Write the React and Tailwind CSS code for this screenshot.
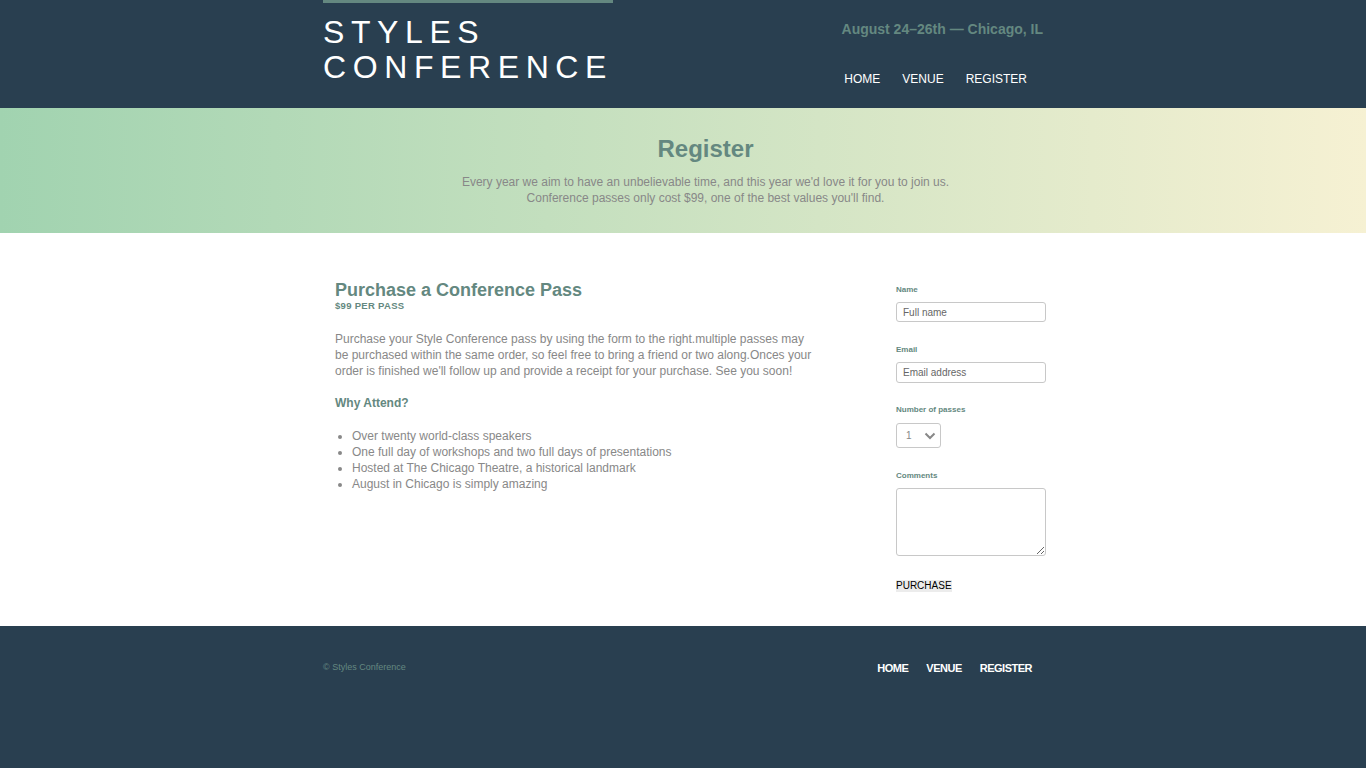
export default function App() {
  const font = { fontFamily: '"Liberation Sans", Arial, sans-serif' };
  return (
    <div style={font} className="min-h-[768px] bg-[#293f50] text-[#888]">
      <header className="bg-[#293f50] h-[108px]">
        <div className="w-[720px] mx-auto flex justify-between">
          <div className="w-[290px] border-t-[3px] border-[#648880] pt-[12px]">
            <h1 className="text-white text-[32px] leading-[35px] tracking-[6.6px] font-normal uppercase">
              Styles
              <br />
              Conference
            </h1>
          </div>
          <div className="flex flex-col items-end">
            <p className="mt-[21px] text-[14px] leading-[16px] font-bold text-[#648880]">
              August 24–26th — Chicago, IL
            </p>
            <nav className="mt-[35px] mr-[16px] flex gap-[22px] text-white text-[12px] leading-[14px]">
              <a>HOME</a>
              <a>VENUE</a>
              <a>REGISTER</a>
            </nav>
          </div>
        </div>
      </header>

      <section className="h-[125px] bg-[linear-gradient(to_right,#a1d3b0,#f6f1d3)] text-center pt-[27px] pl-[45px]">
        <h2 className="text-[24px] leading-[28px] font-bold text-[#648880]">Register</h2>
        <p className="mt-[11px] text-[12px] leading-[16px] text-[#888]">
          Every year we aim to have an unbelievable time, and this year we'd love it for you to join us.
          <br />
          Conference passes only cost $99, one of the best values you'll find.
        </p>
      </section>

      <main className="bg-white h-[393px]">
        <div className="w-[720px] mx-auto flex justify-between">
          <div className="w-[492px] pl-[12px] pt-[47px]">
            <h3 className="text-[18px] leading-[20px] font-bold text-[#648880]">Purchase a Conference Pass</h3>
            <h5 className="text-[9.5px] leading-[11px] font-bold uppercase text-[#648880] tracking-[0.3px]">$99 per pass</h5>
            <p className="mt-[20px] text-[12px] leading-[16px] text-[#888]">
              Purchase your Style Conference pass by using the form to the right.multiple passes may be purchased within the same order, so feel free to bring a friend or two along.Onces your order is finished we'll follow up and provide a receipt for your purchase. See you soon!
            </p>
            <h4 className="mt-[16px] text-[12px] leading-[16px] font-bold text-[#648880]">Why Attend?</h4>
            <ul className="mt-[17px] list-disc pl-[17px] text-[12px] leading-[16px] text-[#888] marker:text-[#888]">
              <li>Over twenty world-class speakers</li>
              <li>One full day of workshops and two full days of presentations</li>
              <li>Hosted at The Chicago Theatre, a historical landmark</li>
              <li>August in Chicago is simply amazing</li>
            </ul>
          </div>
          <form className="w-[150px] mr-[-3px] pt-[52px] flex flex-col">
            <label className="text-[8px] leading-[10px] font-bold text-[#648880]">Name</label>
            <input
              placeholder="Full name"
              className="mt-[7px] w-[150px] h-[20px] border border-[#c8c8c8] rounded-[3px] px-[6px] text-[10px] placeholder:text-[#666] outline-none"
            />
            <label className="mt-[23px] text-[8px] leading-[10px] font-bold text-[#648880]">Email</label>
            <input
              placeholder="Email address"
              className="mt-[7px] w-[150px] h-[21px] border border-[#c8c8c8] rounded-[3px] px-[6px] text-[10px] placeholder:text-[#666] outline-none"
            />
            <label className="mt-[22px] text-[8px] leading-[10px] font-bold text-[#648880]">Number of passes</label>
            <div className="mt-[8px] w-[45px] h-[25px] border border-[#c8c8c8] rounded-[3px] flex items-center justify-between pl-[9px] pr-[4px] text-[10px] text-[#888]">
              <span>1</span>
              <svg width="12" height="8" viewBox="0 0 12 8" fill="none">
                <path d="M1.5 1.5 L6 6 L10.5 1.5" stroke="#888" strokeWidth="2" />
              </svg>
            </div>
            <label className="mt-[23px] text-[8px] leading-[10px] font-bold text-[#648880]">Comments</label>
            <textarea className="mt-[7px] w-[150px] h-[68px] border border-[#c8c8c8] rounded-[3px] outline-none resize" />
            <div className="mt-[16px]">
              <button type="button" className="bg-[#ececec] text-black text-[10px] leading-[12px] px-0 uppercase">
                Purchase
              </button>
            </div>
          </form>
        </div>
      </main>

      <footer className="bg-[#293f50] h-[142px]">
        <div className="w-[720px] mx-auto flex justify-between pt-[35px]">
          <small className="text-[9px] leading-[12px] text-[#648880]">© Styles Conference</small>
          <nav className="mr-[11px] flex gap-[18px] text-white text-[11px] leading-[14px] font-bold tracking-[-0.5px]">
            <a>HOME</a>
            <a>VENUE</a>
            <a>REGISTER</a>
          </nav>
        </div>
      </footer>
    </div>
  );
}
